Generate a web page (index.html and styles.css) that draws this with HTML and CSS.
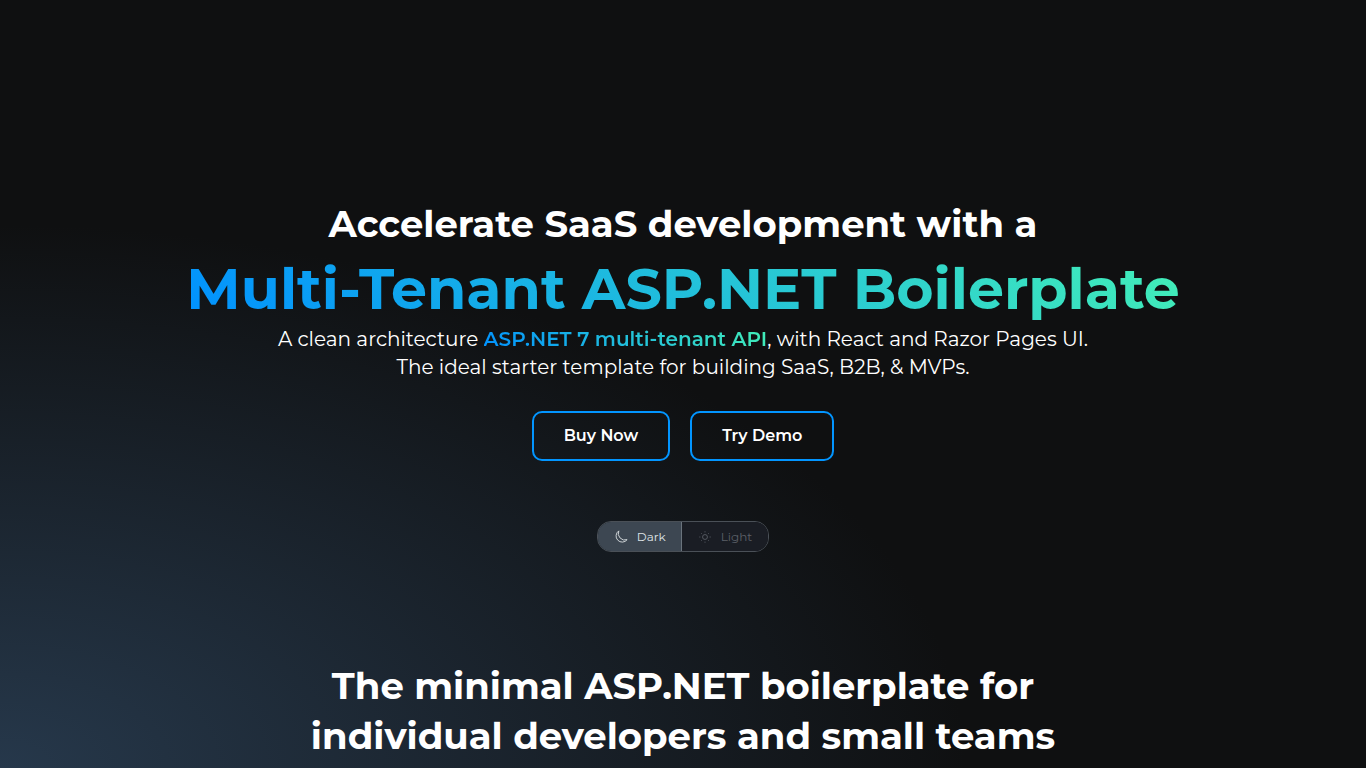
FILE: index.html
```
<!DOCTYPE html>
<html lang="en">
<head>
<meta charset="utf-8">
<meta name="viewport" content="width=device-width, initial-scale=1">
<title>Multi-Tenant ASP.NET Boilerplate</title>
<link rel="stylesheet" href="styles.css">
</head>
<body>
<main class="page">
  <section class="hero">
    <h1 class="hero-title">Accelerate SaaS development with a <span class="product gradient">Multi-Tenant ASP.NET Boilerplate</span></h1>
    <p class="lead">A clean architecture <strong class="gradient">ASP.NET 7 multi-tenant API</strong>, with React and Razor Pages UI.<br>The ideal starter template for building SaaS, B2B, &amp; MVPs.</p>
    <div class="actions">
      <a class="button" href="#buy">Buy Now</a>
      <a class="button" href="#demo">Try Demo</a>
    </div>
    <div class="theme-switch">
      <button class="theme active" type="button"><svg class="icon" viewBox="0 0 16 16" aria-hidden="true"><path d="M5.500 1A7 7 0 1 0 15 11A7.500 7.500 0 0 1 5.500 1Z"/></svg>Dark</button>
      <button class="theme" type="button"><svg class="icon" viewBox="0 0 16 16" aria-hidden="true"><circle cx="8" cy="8" r="2.800"/><path d="M8 1.500v1.200M8 13.300v1.200M1.500 8h1.200M13.300 8h1.200M3.500 3.500l.8.8M12.500 3.500l-.8.8M3.500 12.500l.8-.8M12.500 12.500l-.8-.8"/></svg>Light</button>
    </div>
  </section>
  <section class="intro">
    <h2 class="intro-title">The minimal ASP.NET boilerplate for<br>individual developers and small teams</h2>
  </section>
</main>
</body>
</html>
```
FILE: styles.css
```
* { box-sizing: border-box; }
body {
  margin: 0;
  min-height: 100vh;
  overflow: hidden;
  background: radial-gradient(ellipse at bottom left, #26384b 0%, #0f1011 50%) #0f1011;
  color: #fff;
  font-family: Metropolis, Montserrat, "Open Sans", sans-serif;
}
.page { padding-top: 199px; text-align: center; }
.hero-title { margin: 0; font-size: 37px; line-height: 50px; font-weight: 700; }
.product { display: block; width: fit-content; margin: 4px auto 0; font-size: 57px; line-height: 72px; }
.gradient { background: linear-gradient(45deg, #0090ff, #43efb7); background-clip: text; color: transparent; }
.lead { margin: 0; font-size: 20px; line-height: 28px; }
.lead strong { font-weight: 600; }
.actions { display: flex; justify-content: center; gap: 20px; margin-top: 30px; }
.button { padding: 11px 30px; border: 2px solid #0295ff; border-radius: 10px; color: #fff; font-size: 16px; line-height: 24px; font-weight: 600; text-decoration: none; }
.theme-switch { display: flex; width: fit-content; margin: 60px auto 0; border: 1px solid #4a5057; border-radius: 14px; overflow: hidden; }
.theme { display: flex; align-items: center; gap: 9px; padding: 0 16px; height: 29px; border: 0; background: #1a1d24; color: #5c6068; font-family: inherit; font-size: 12px; }
.theme.active { padding-right: 15px; border-right: 1px solid #6a737c; background: #3d4752; color: #dfe3e6; }
.icon { width: 14px; height: 14px; fill: none; stroke: currentColor; }
.intro { margin-top: 109px; }
.intro-title { margin: 0; font-size: 37px; line-height: 50px; font-weight: 700; }
```
